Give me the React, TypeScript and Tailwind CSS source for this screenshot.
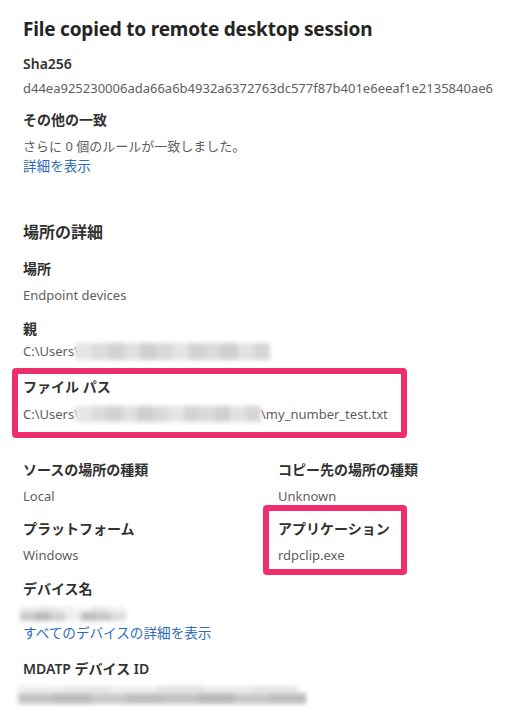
import React from 'react';

// Ползунки размытия — имитация замазанных данных
const Smudge: React.FC<{ w: number; h: number; tones: string[]; className?: string }> = ({ w, h, tones, className }) => (
  <span
    className={`inline-flex overflow-hidden align-middle blur-[2px] ${className ?? ''}`}
    style={{ width: w, height: h }}
  >
    {tones.map((t, i) => (
      <span key={i} className="flex-1 h-full" style={{ background: t }} />
    ))}
  </span>
);

const Label: React.FC<{ children: React.ReactNode; className?: string }> = ({ children, className }) => (
  <div className={`text-[14px] leading-5 font-semibold text-[#323130] ${className ?? ''}`}>{children}</div>
);

const Value: React.FC<{ children: React.ReactNode; className?: string }> = ({ children, className }) => (
  <div className={`text-[13px] leading-5 text-[#605e5c] whitespace-nowrap ${className ?? ''}`}>{children}</div>
);

const userTones = ['#e6e6e6', '#dcdcdc', '#d2d2d2', '#e0e0e0', '#cfcfcf', '#d9d9d9', '#e4e4e4', '#d4d4d4', '#dadada', '#d0d0d0', '#e2e2e2', '#d6d6d6'];

export default function App() {
  return (
    <div className="w-[526px] min-h-[719px] bg-white pl-[23px] pt-[15px] font-['Noto_Sans','Noto_Sans_CJK_JP',sans-serif]">
      <h1 className="text-[19px] leading-7 font-bold text-[#252423] tracking-[-0.2px]">
        File copied to remote desktop session
      </h1>

      <Label className="mt-[11px]">Sha256</Label>
      <Value className="mt-[4px]">d44ea925230006ada66a6b4932a6372763dc577f87b401e6eeaf1e2135840ae6</Value>

      <Label className="mt-[12px]">その他の一致</Label>
      <Value className="mt-[6px] text-[13.6px]">さらに 0 個のルールが一致しました。</Value>
      <div className="text-[13.6px] leading-5 text-[#2f6cb5]">詳細を表示</div>

      <div className="mt-[44px] text-[16px] leading-6 font-semibold text-[#323130]">場所の詳細</div>

      <Label className="mt-[15px]">場所</Label>
      <Value className="mt-[6px]">Endpoint devices</Value>

      <Label className="mt-[14px]">親</Label>
      <Value className="mt-[2px] flex items-center">
        <span>C:\Users\</span>
        <Smudge w={195} h={17} tones={userTones} className="-ml-[4px]" />
      </Value>

      <div className="mt-[7px] -ml-[11px] w-[395px] border-[6px] border-[#ef2f6d] rounded-[4px] pl-[5px] pt-[3px] pb-[8px]">
        <Label>ファイル パス</Label>
        <Value className="mt-[7px] flex items-center">
          <span>C:\Users\</span>
          <Smudge w={186} h={16} tones={userTones} className="-ml-[4px]" />
          <span>\my_number_test.txt</span>
        </Value>
      </div>

      <div className="mt-[22px] grid grid-cols-[255px_1fr]">
        <div>
          <Label>ソースの場所の種類</Label>
          <Value className="mt-[6px]">Local</Value>
        </div>
        <div>
          <Label>コピー先の場所の種類</Label>
          <Value className="mt-[6px]">Unknown</Value>
        </div>

        <div className="mt-[13px]">
          <Label>プラットフォーム</Label>
          <Value className="mt-[6px]">Windows</Value>
        </div>
        <div className="mt-[13px] self-start">
          <div className="-ml-[15px] -mt-[14px] -mb-[10px] w-[144px] border-[6px] border-[#ef2f6d] rounded-[4px] pl-[9px] pt-[8px] pb-[4px]">
            <Label>アプリケーション</Label>
            <Value className="mt-[6px]">rdpclip.exe</Value>
          </div>
        </div>
      </div>

      <Label className="mt-[14px]">デバイス名</Label>
      <div className="mt-[8px] -ml-[3px] flex flex-col">
        <Smudge w={106} h={5} tones={['#ececec', '#e2e2e2', '#eeeeee', '#f2f2f2', '#e4e4e4', '#efefef']} />
        <Smudge w={106} h={9} tones={['#c9c9c9', '#b9b9b9', '#cfcfcf', '#ececec', '#bdbdbd', '#c6c6c6', '#dcdcdc']} />
      </div>
      <div className="mt-[2px] text-[13.6px] leading-5 text-[#2f6cb5]">すべてのデバイスの詳細を表示</div>

      <Label className="mt-[16px]">MDATP デバイス ID</Label>
      <div className="mt-[7px] -ml-[5px] flex flex-col">
        <Smudge w={280} h={7} tones={['#ededed', '#e6e6e6', '#efefef', '#e2e2e2', '#ebebeb', '#e4e4e4']} />
        <Smudge w={288} h={11} tones={['#c4c4c4', '#bababa', '#c9c9c9', '#bebebe', '#c3c3c3', '#b8b8b8', '#c7c7c7', '#bdbdbd']} />
      </div>
    </div>
  );
}
